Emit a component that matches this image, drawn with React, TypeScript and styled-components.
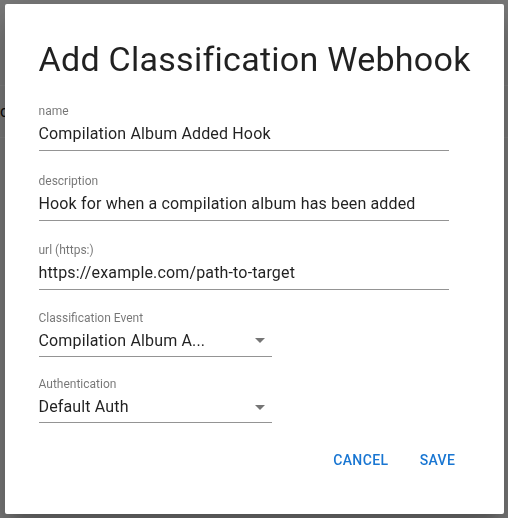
import React from "react";
import styled, { createGlobalStyle } from "styled-components";

const GlobalStyle = createGlobalStyle`
  html, body {
    margin: 0;
    padding: 0;
    background: #f2f2f2;
    font-family: Roboto, "Liberation Sans", Arial, sans-serif;
  }
`;

const Page = styled.div`
  width: 508px;
  height: 518px;
  overflow: hidden;
  display: flex;
  flex-direction: column;
`;

const PageHeader = styled.div`
  height: 85px;
  border-bottom: 1px solid #ffffff;
`;

const PageRow = styled.div`
  height: 51px;
  border-bottom: 1px solid #ffffff;
  display: flex;
  align-items: center;
  font-size: 16px;
  color: #111;
`;

const Backdrop = styled.div`
  position: fixed;
  inset: 0;
  background: rgba(0, 0, 0, 0.5);
  display: flex;
  align-items: center;
  justify-content: center;
`;

const Dialog = styled.div`
  width: 499px;
  box-sizing: border-box;
  background: #fff;
  border-radius: 2px;
  padding: 34.4px 34px 36px 34px;
  display: flex;
  flex-direction: column;
  box-shadow: 0px 11px 15px -7px rgba(0, 0, 0, 0.2),
    0px 24px 38px 3px rgba(0, 0, 0, 0.14), 0px 9px 46px 8px rgba(0, 0, 0, 0.12);
`;

const Title = styled.h2`
  margin: 0 0 21.6px 0;
  font-size: 34px;
  line-height: 42px;
  font-weight: 400;
  color: rgba(0, 0, 0, 0.87);
  letter-spacing: 0.008em;
  white-space: nowrap;
`;

const Form = styled.div`
  display: flex;
  flex-direction: column;
  gap: 20.6px;
`;

const Field = styled.label<{ $width: number }>`
  width: ${(p) => p.$width}px;
  display: flex;
  flex-direction: column;
`;

const Label = styled.span<{ $select?: boolean }>`
  padding-top: ${(p) => (p.$select ? 1 : 3)}px;
  font-size: 12px;
  line-height: 12px;
  color: rgba(0, 0, 0, 0.54);
`;

const InputBox = styled.div<{ $select?: boolean }>`
  position: relative;
  margin-top: 1px;
  padding: 6px 0 ${(p) => (p.$select ? 6 : 7)}px 0;
  border-bottom: 1px solid rgba(0, 0, 0, 0.42);
  font-size: 16px;
  line-height: 19px;
  letter-spacing: 0.15px;
  color: rgba(0, 0, 0, 0.87);
  white-space: nowrap;
`;

const Arrow = styled.svg`
  position: absolute;
  right: 0;
  top: calc(50% - 12px);
  width: 24px;
  height: 24px;
  fill: rgba(0, 0, 0, 0.54);
`;

const Actions = styled.div`
  margin-top: 18.3px;
  display: flex;
  justify-content: flex-end;
  gap: 9px;
`;

const Button = styled.button`
  min-width: 64px;
  padding: 6px 8px;
  border: none;
  background: transparent;
  font-family: Roboto, "Liberation Sans", Arial, sans-serif;
  font-size: 14px;
  font-weight: 500;
  line-height: 24.5px;
  letter-spacing: 0.02857em;
  text-transform: uppercase;
  color: #1976d2;
  border-radius: 4px;
  cursor: pointer;
`;

const TextField = ({ label, value }: { label: string; value: string }) => (
  <Field $width={410}>
    <Label>{label}</Label>
    <InputBox>{value}</InputBox>
  </Field>
);

const SelectField = ({ label, value }: { label: string; value: string }) => (
  <Field $width={233}>
    <Label $select>{label}</Label>
    <InputBox $select>
      {value}
      <Arrow viewBox="0 0 24 24">
        <path d="M7 10l5 5 5-5z" />
      </Arrow>
    </InputBox>
  </Field>
);

export default function App() {
  return (
    <>
      <GlobalStyle />
      <Page>
        <PageHeader />
        <PageRow>c</PageRow>
      </Page>
      <Backdrop>
        <Dialog>
          <Title>Add Classification Webhook</Title>
          <Form>
            <TextField label="name" value="Compilation Album Added Hook" />
            <TextField
              label="description"
              value="Hook for when a compilation album has been added"
            />
            <TextField
              label="url (https:)"
              value="https://example.com/path-to-target"
            />
            <SelectField
              label="Classification Event"
              value="Compilation Album A..."
            />
            <SelectField label="Authentication" value="Default Auth" />
          </Form>
          <Actions>
            <Button>Cancel</Button>
            <Button>Save</Button>
          </Actions>
        </Dialog>
      </Backdrop>
    </>
  );
}
